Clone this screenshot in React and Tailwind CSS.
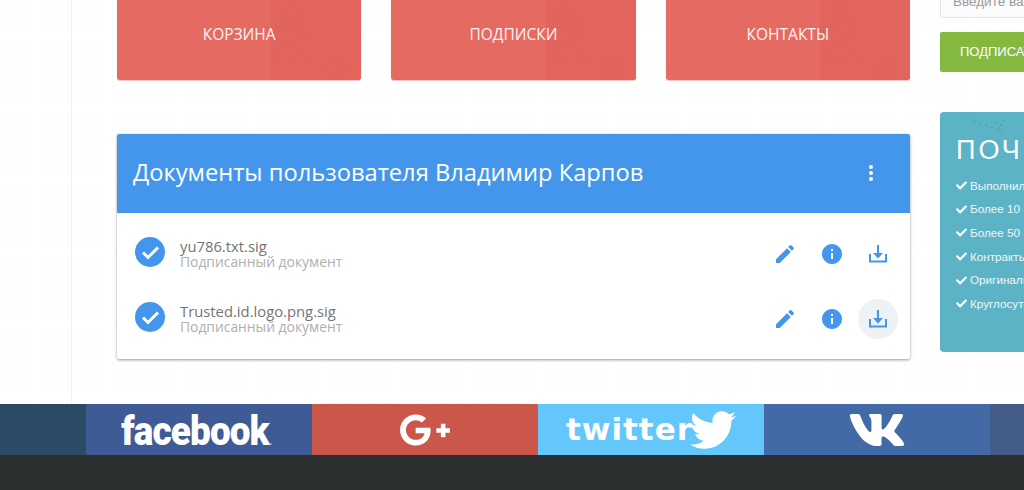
import { FaCheck, FaGooglePlusG, FaTwitter, FaVk } from 'react-icons/fa';
import { MdEdit, MdInfo } from 'react-icons/md';

const dots = [
  [20, 6], [26, 12], [14, 16], [22, 20], [30, 24], [10, 28], [18, 30], [26, 34], [34, 38], [14, 42], [24, 44], [32, 50], [8, 56], [20, 58], [38, 60],
  [62, 60], [70, 62], [56, 66], [66, 68], [74, 70], [60, 74], [70, 76],
];

const tealDots = [[1, 1], [7, 3], [13, 5], [19, 7], [25, 9], [31, 11], [34, 7], [37, 3], [29, 5], [35, 13]];

function Tile({ title }) {
  return (
    <div className="relative flex-1 h-[80px] pb-[10px] bg-[#e56a62] rounded-b-[3px] flex items-center justify-center overflow-hidden shadow-[0_1px_1px_rgba(220,100,100,0.4)]">
      <div className="absolute top-0 bottom-0 right-0 w-[90px] bg-[#e2655d]" />
      <svg className="absolute right-0 bottom-0" width="90" height="80" viewBox="0 0 90 80">
        {dots.map(([x, y], i) => (
          <circle key={i} cx={x} cy={y} r="0.5" fill="#b8453f" />
        ))}
      </svg>
      <span className="relative text-[#fdf3f2] text-[15.500px] font-['Open_Sans',sans-serif]">{title}</span>
    </div>
  );
}

function DownloadIcon() {
  return (
    <svg width="20" height="20" viewBox="0 0 20 20" fill="none" stroke="#4496ec" strokeWidth="2">
      <path d="M2 10v7.500h16V10" />
      <path d="M10 1v9" />
      <path d="M5 9h10l-5 5.500z" fill="#4496ec" stroke="none" />
    </svg>
  );
}

function DocRow({ name, active }) {
  return (
    <div className="h-[65px] flex items-center pl-[18px] pr-[12px]">
      <svg width="30" height="30" viewBox="0 0 30 30" className="shrink-0 -mt-[3px]">
        <circle cx="15" cy="15" r="15" fill="#4496ec" />
        <path d="M8 15.500 13 20.500 23 10.500" fill="none" stroke="#fff" strokeWidth="3" />
      </svg>
      <div className="ml-[15px] flex-1 font-['Open_Sans',sans-serif]">
        <div className="text-[14.800px] leading-[16px] text-[#757575]">{name}</div>
        <div className="text-[13.850px] leading-[16px] text-[#b0b0b0]">Подписанный документ</div>
      </div>
      <div className="flex items-center">
        <div className="w-[47px] flex justify-center"><MdEdit size={24} color="#4496ec" /></div>
        <div className="w-[47px] flex justify-center"><MdInfo size={24} color="#4496ec" /></div>
        <div className={`w-[40px] h-[40px] ml-[3px] rounded-full flex items-center justify-center ${active ? 'bg-[#eef1f6]' : ''}`}>
          <DownloadIcon />
        </div>
      </div>
    </div>
  );
}

const reasons = ['Выполнили', 'Более 10', 'Более 50', 'Контракты', 'Оригиналы', 'Круглосуточно'];

export default function App() {
  return (
    <div className="w-[1024px] h-[490px] overflow-hidden bg-white flex flex-col">
      <div className="h-[404px] flex shrink-0 bg-[radial-gradient(#eff1f3_0.6px,transparent_0.7px)] bg-[length:9px_9px]">
        <div className="w-[117px] shrink-0">
          <div className="w-[72px] h-full border-r border-[#f1f2f4]" />
        </div>

        <div className="w-[793px] shrink-0">
          <div className="flex gap-[30px]">
            <Tile title="КОРЗИНА" />
            <Tile title="ПОДПИСКИ" />
            <Tile title="КОНТАКТЫ" />
          </div>

          <div className="mt-[54px] rounded-[2px] shadow-[0_1px_3px_rgba(0,0,0,0.4)] bg-white">
            <div className="h-[79px] bg-[#4496ec] rounded-t-[2px] flex items-center justify-between pl-[16px] pr-[37px]">
              <h1 className="text-white text-[23.700px] -mt-[1px] font-['Open_Sans',sans-serif] font-normal">Документы пользователя Владимир Карпов</h1>
              <div className="flex flex-col gap-[2px] -mt-[1px]">
                <span className="w-[4px] h-[4px] rounded-full bg-white" />
                <span className="w-[4px] h-[4px] rounded-full bg-white" />
                <span className="w-[4px] h-[4px] rounded-full bg-white" />
              </div>
            </div>
            <div className="pt-[8px] pb-[8px]">
              <DocRow name="yu786.txt.sig" />
              <DocRow name="Trusted.id.logo.png.sig" active />
            </div>
          </div>
        </div>

        <div className="w-[84px] ml-[30px] shrink-0 overflow-hidden font-['Liberation_Sans',sans-serif]">
          <div className="w-[240px]">
            <div className="h-[18px] pb-[5px] pl-[12px] flex items-end overflow-hidden border border-t-0 border-[#dfe5ea] rounded-b-[2px] bg-[#fbfcfd]">
              <span className="text-[13.500px] leading-[20px] text-[#9a9a9a]">Введите ваш email</span>
            </div>
            <div className="mt-[14px] h-[40px] pl-[20px] flex items-center bg-[#85b83f] rounded-[2px] text-white text-[13px]">ПОДПИСАТЬСЯ</div>
            <div className="relative mt-[40px] h-[240px] bg-[#5cb3c5] rounded-[4px] pl-[16px] pt-[22px]">
              <svg className="absolute left-[27px] top-[6px]" width="40" height="16" viewBox="0 0 40 16">
                {tealDots.map(([x, y], i) => (
                  <circle key={i} cx={x} cy={y} r="0.6" fill="#2f7f92" />
                ))}
              </svg>
              <div className="text-white text-[27px] leading-[32px] tracking-[3px]">ПОЧЕМУ</div>
              <ul className="mt-[7.500px]">
                {reasons.map((r) => (
                  <li key={r} className="h-[23.700px] flex items-center gap-[3px] text-white text-[11.700px]">
                    <FaCheck size={11} />
                    <span className="opacity-90">{r}</span>
                  </li>
                ))}
              </ul>
            </div>
          </div>
        </div>
      </div>

      <div className="h-[51px] flex shrink-0 text-white overflow-hidden">
        <div className="w-[86px] bg-[#2a4a66]" />
        <div className="w-[226px] bg-[#3f5b95] flex items-center justify-center pr-[5px] pt-[3px]">
          <span className="text-[41px] leading-none font-black tracking-[-1px] font-['Roboto',sans-serif] scale-x-[0.9]">
            facebook<span className="text-[#a9b6d2] text-[12px]">.</span>
          </span>
        </div>
        <div className="w-[226px] bg-[#cb574b] flex items-center justify-center">
          <FaGooglePlusG size={52} />
        </div>
        <div className="w-[226px] bg-[#63c7fb] flex items-center justify-center">
          <span className="text-[31px] leading-none font-bold tracking-[1px] font-['DejaVu_Sans',sans-serif]">twitter</span>
          <FaTwitter size={46} className="-ml-[3px]" />
        </div>
        <div className="w-[226px] bg-[#416aa6] flex items-center justify-center">
          <FaVk size={58} />
        </div>
        <div className="flex-1 bg-[#445d88]" />
      </div>
      <div className="flex-1 bg-[#2b2f30]" />
    </div>
  );
}
